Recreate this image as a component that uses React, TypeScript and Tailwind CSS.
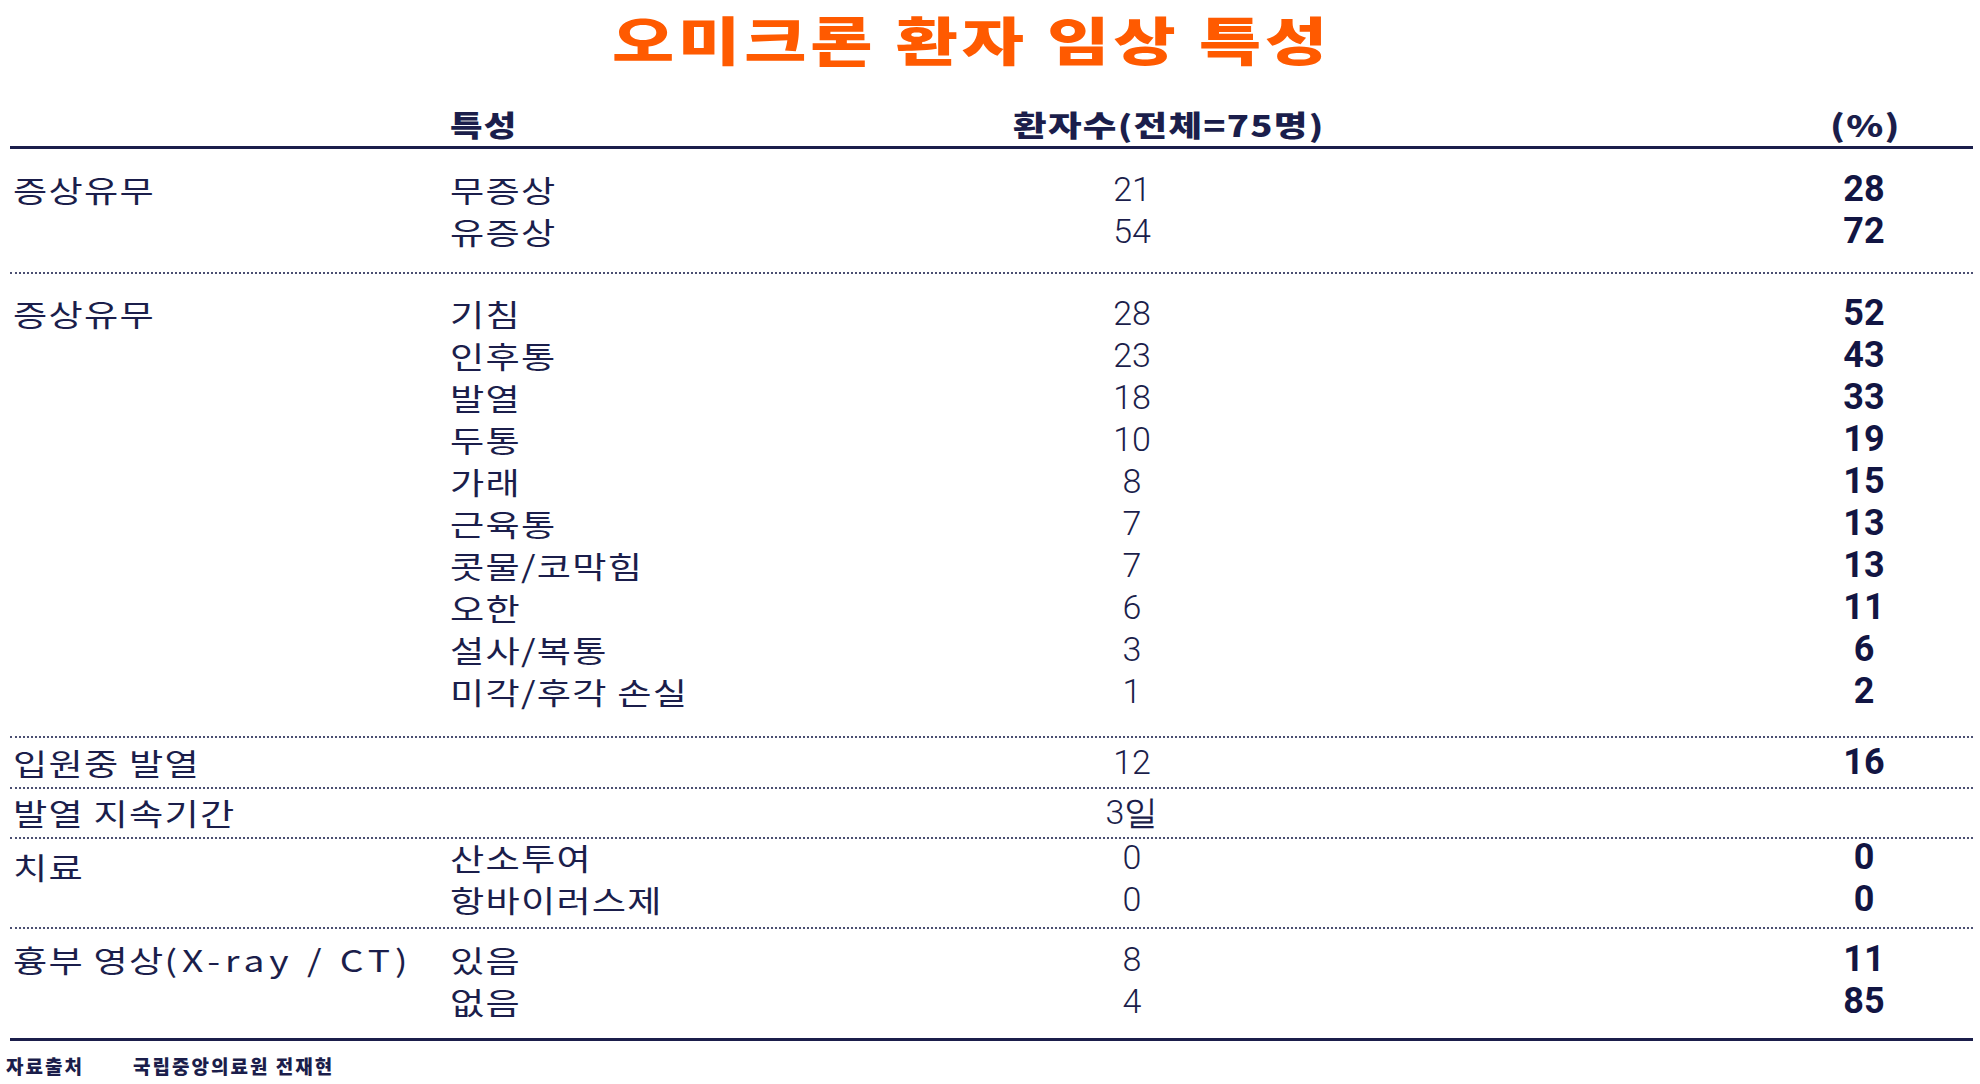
import React from "react"

type Row = { group?: React.ReactNode; item?: string; count: string; pct?: string }

const groups: { rows: Row[]; pad: string; groupOffset?: string }[] = [
  {
    pad: "pt-[19px] pb-[20px]",
    rows: [
      { group: "증상유무", item: "무증상", count: "21", pct: "28" },
      { item: "유증상", count: "54", pct: "72" },
    ],
  },
  {
    pad: "pt-[18px] pb-[24px]",
    rows: [
      { group: "증상유무", item: "기침", count: "28", pct: "52" },
      { item: "인후통", count: "23", pct: "43" },
      { item: "발열", count: "18", pct: "33" },
      { item: "두통", count: "10", pct: "19" },
      { item: "가래", count: "8", pct: "15" },
      { item: "근육통", count: "7", pct: "13" },
      { item: "콧물/코막힘", count: "7", pct: "13" },
      { item: "오한", count: "6", pct: "11" },
      { item: "설사/복통", count: "3", pct: "6" },
      { item: "미각/후각 손실", count: "1", pct: "2" },
    ],
  },
  {
    pad: "pt-[3px] pb-[4px]",
    rows: [{ group: "입원중 발열", count: "12", pct: "16" }],
  },
  {
    pad: "pt-[2px] pb-[4px]",
    rows: [{ group: "발열 지속기간", count: "3일" }],
  },
  {
    pad: "-mt-[3px] pb-[7px]",
    groupOffset: "translate-y-[9px]",
    rows: [
      { group: "치료", item: "산소투여", count: "0", pct: "0" },
      { item: "항바이러스제", count: "0", pct: "0" },
    ],
  },
  {
    pad: "pt-[9px] pb-[16px]",
    rows: [
      {
        group: (
          <>
            흉부 영상<span className="tracking-[4px]">(X-ray / CT)</span>
          </>
        ),
        item: "있음",
        count: "8",
        pct: "11",
      },
      { item: "없음", count: "4", pct: "85" },
    ],
  },
]

const kr = "font-['Noto_Sans_CJK_KR','Noto_Sans',sans-serif]"

function Wide({ children, className = "" }: { children: React.ReactNode; className?: string }) {
  return <span className={`inline-block origin-left whitespace-nowrap ${className}`}>{children}</span>
}

function TableRow({ row, groupOffset }: { row: Row; groupOffset?: string }) {
  return (
    <div className="flex h-[42px] items-center">
      <div className={`w-[440px] shrink-0 pl-[3px] text-[30px] tracking-[1px] ${groupOffset ?? ""}`}>
        {row.group && <Wide className="scale-x-[1.24]">{row.group}</Wide>}
      </div>
      <div className="w-[523px] shrink-0 text-[30px] tracking-[1px]">
        {row.item && <Wide className="scale-x-[1.24]">{row.item}</Wide>}
      </div>
      <div className="w-[318px] shrink-0 text-center font-['Roboto',sans-serif] text-[34px] font-light">
        {row.count}
      </div>
      <div className="flex-1" />
      <div className="w-[120px] shrink-0 text-center font-['Roboto',sans-serif] text-[36px] font-bold text-[#121543]">
        {row.pct}
      </div>
      <div className="w-[49px] shrink-0" />
    </div>
  )
}

export default function App() {
  return (
    <div className={`h-[1084px] w-[1980px] overflow-hidden bg-white text-[#1b1e4b] ${kr}`}>
      <h1 className="flex h-[78px] items-center justify-center pr-[36px] text-[52px] font-black leading-none tracking-[3px] text-[#ff5a00]">
        <span className="inline-block scale-x-[1.3] whitespace-nowrap">오미크론 환자 임상 특성</span>
      </h1>
      <div className="ml-[10px] mr-[7px]">
        <div className="flex h-[71px] items-center border-b-[3px] border-[#1b1e4b] pt-[25px] font-black">
          <div className="w-[440px] shrink-0" />
          <div className="w-[523px] shrink-0 text-[29px] tracking-[1px]">
            <Wide className="scale-x-[1.22]">특성</Wide>
          </div>
          <div className="w-[420px] shrink-0 pl-[40px] text-[29px] tracking-[1px]">
            <Wide className="scale-x-[1.26]">환자수(전체=75명)</Wide>
          </div>
          <div className="flex-1" />
          <div className="w-[120px] shrink-0 pl-[17px] text-[30px] tracking-[1px]">
            <Wide className="scale-x-[1.25]">(%)</Wide>
          </div>
          <div className="w-[40px] shrink-0" />
        </div>
        {groups.map((g, gi) => (
          <div
            key={gi}
            className={`${g.pad} ${
              gi === groups.length - 1
                ? "border-b-[3px] border-solid border-[#1b1e4b]"
                : "border-b-[2px] border-dotted border-[#4b4f72]"
            }`}
          >
            {g.rows.map((r, ri) => (
              <TableRow key={ri} row={r} groupOffset={g.groupOffset} />
            ))}
          </div>
        ))}
      </div>
      <div className="flex items-center pl-[6px] pt-[11px] text-[19px] font-black tracking-[2px] text-[#1b1e4b]">
        <span className="w-[127px]">자료출처</span>
        <span>국립중앙의료원 전재현</span>
      </div>
    </div>
  )
}
